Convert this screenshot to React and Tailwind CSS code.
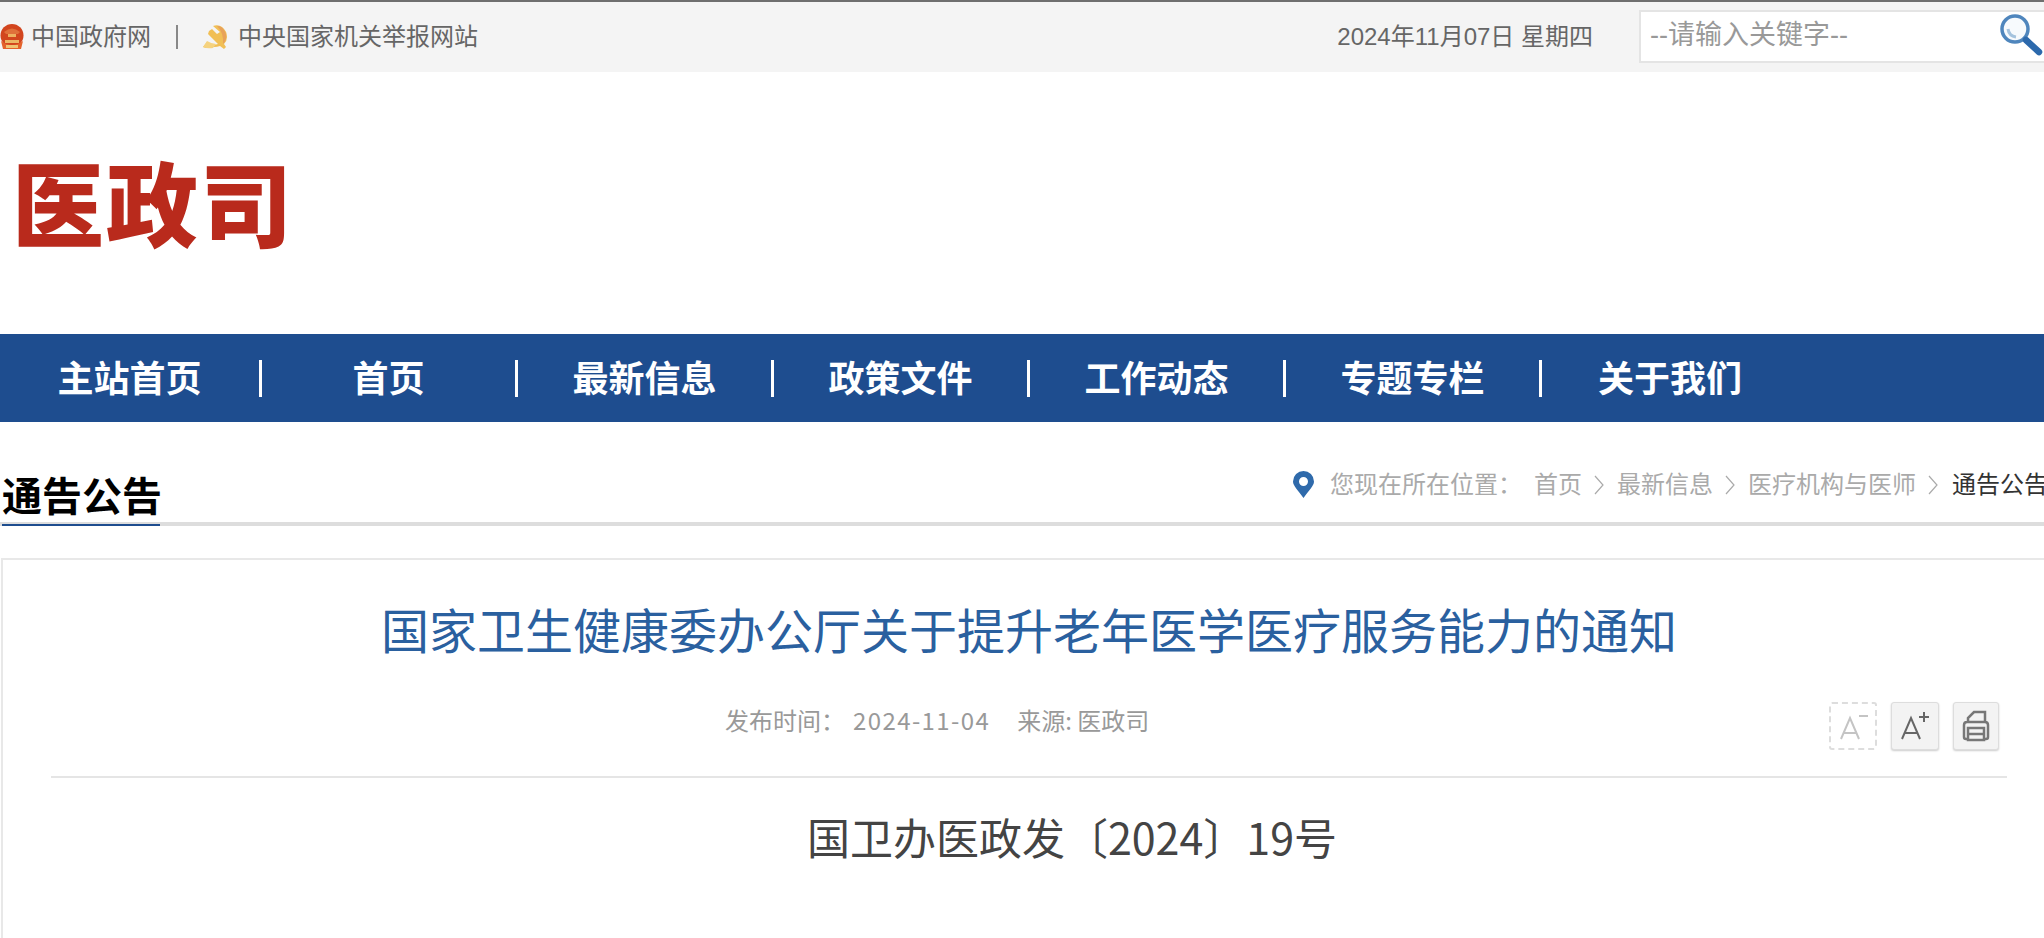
const SANS = 'font-["Liberation_Sans","Noto_Sans_CJK_SC",sans-serif]'

const NAV = ['主站首页', '首页', '最新信息', '政策文件', '工作动态', '专题专栏', '关于我们']
const CRUMBS = ['首页', '最新信息', '医疗机构与医师']

function Emblem() {
  return (
    <svg width="24" height="26" viewBox="0 0 24 26" className="shrink-0 blur-[0.4px]">
      <circle cx="12" cy="11.500" r="11.500" fill="#d2451e" />
      <path d="M4 8q8-7 16 0l-2 2H6z" fill="#e0703a" />
      <path d="M8 10h8v3H8z" fill="#eeb060" />
      <path d="M5 16h14v3H5z" fill="#ecb765" />
      <path d="M1 17q11 8 22 0l-2 8H3z" fill="#e4622a" />
      <path d="M6 21h12v3H6z" fill="#f0c474" />
    </svg>
  )
}

function PartyIcon() {
  return (
    <svg width="25" height="24" viewBox="0 0 25 24" className="shrink-0 blur-[0.4px]">
      <path d="M10 1q5-2 9 1q5 4 5 10q0 4-3 7l2 3-2 2-4-3q-6 2-11 0l-3 2-3-1 4-5q5 4 11 2L5 9l1-3 3-2 5 5 3-2z" fill="#f1bf55" />
      <path d="M14 1q5 0 7 4q3 4 2 9q-1 3-3 5q1-11-6-18z" fill="#e8a259" />
      <path d="M0 22l4-6q5 3 9 3l-3 4q-6 1-10-1z" fill="#f5d27e" />
    </svg>
  )
}

function SearchIcon() {
  return (
    <svg width="43" height="42" viewBox="0 0 43 42" className="-mt-[2px] shrink-0 blur-[0.3px]">
      <circle cx="15" cy="15" r="13" fill="#f7fafd" stroke="#4f86bd" strokeWidth="3.500" />
      <path d="M8 15q1 7 8 8" fill="none" stroke="#a5c3de" strokeWidth="3" />
      <path d="M26 26l13 12" stroke="#2c69ac" strokeWidth="6.500" strokeLinecap="round" />
    </svg>
  )
}

function Chevron() {
  return (
    <svg width="11" height="20" viewBox="0 0 11 20" className="shrink-0">
      <path d="M1 1l8 9-8 9" fill="none" stroke="#aaa" strokeWidth="1.200" />
    </svg>
  )
}

function TopBar() {
  return (
    <div className="flex h-[72px] items-center border-t-2 border-[#6f6f6f] bg-[#f4f4f4] text-[24px] text-[#666]">
      <Emblem />
      <span className="ml-[7px]">中国政府网</span>
      <span className="ml-[25px] h-6 w-0.5 bg-[#888]" />
      <span className="ml-[25px]"><PartyIcon /></span>
      <span className="ml-[10px]">中央国家机关举报网站</span>
      <span className="-mt-px ml-auto">2024年11月07日 星期四</span>
      <div className="-mt-[2px] ml-[46px] flex h-[53px] w-[405px] items-center justify-between border-2 border-r-0 border-[#e4e4e4] bg-white pl-[9px] pr-[1px] text-[27px] text-[#999]">
        <span className="-mt-[2px]">--请输入关键字--</span>
        <SearchIcon />
      </div>
    </div>
  )
}

function NavBar() {
  return (
    <nav className="flex h-[88px] items-center bg-[#1e4d8f] text-[36px] font-bold text-white">
      {NAV.map((item, i) => (
        <div key={item} className={i === 0 ? 'flex w-[262px] items-center' : 'flex w-[256px] items-center'}>
          <span className="flex-1 pt-[3px] text-center">{item}</span>
          {i < NAV.length - 1 && <span className="h-[37px] w-[3px] bg-white" />}
        </div>
      ))}
    </nav>
  )
}

function Breadcrumb() {
  return (
    <div className="ml-[1132px] flex shrink-0 items-center gap-[15px] whitespace-nowrap text-[24px] text-[#aaa]">
      <svg width="23" height="27" viewBox="0 0 23 27" className="shrink-0">
        <path fillRule="evenodd" d="M11.500 27C6 19 1 15 1 10.500a10.500 10.500 0 0 1 21 0C22 15 17 19 11.500 27zm0-12a4.500 4.500 0 1 0 0-9 4.500 4.500 0 0 0 0 9z" fill="#2f6aab" />
      </svg>
      <span>您现在所在位置：</span>
      <span className="-ml-[3px] flex items-center gap-[12px]">
        {CRUMBS.map(c => (
          <span key={c} className="flex items-center gap-[12px]">
            <span>{c}</span>
            <Chevron />
          </span>
        ))}
        <span className="ml-px text-[#333]">通告公告</span>
      </span>
    </div>
  )
}

function ToolButtons() {
  return (
    <div className="flex items-center gap-[14px]">
      <div className="grid h-12 w-12 place-items-center rounded-[3px] border-2 border-dashed border-[#ddd]">
        <svg width="32" height="30" viewBox="0 0 32 30">
          <path d="M4 28L13 7l9 21M7 22h12M22 5h9" fill="none" stroke="#c4c4c4" strokeWidth="2" />
        </svg>
      </div>
      <div className="grid h-12 w-12 place-items-center rounded-[3px] border border-[#ddd] bg-[#f3f3f3] shadow-[0_1px_2px_#ccc]">
        <svg width="32" height="30" viewBox="0 0 32 30">
          <path d="M3 28L12 7l9 21M6 22h12M20 6h10M25 1v10" fill="none" stroke="#666" strokeWidth="2" />
        </svg>
      </div>
      <div className="grid h-12 w-[46px] place-items-center rounded-[3px] border border-[#ddd] bg-[#f3f3f3] shadow-[0_1px_2px_#ccc]">
        <svg width="28" height="32" viewBox="0 0 28 32">
          <path d="M6 12V8l6-6h11v10M6 29H4q-2 0-2-2V15q0-3 3-3h18q3 0 3 3v12q0 2-2 2h-2M6 18h16v12H6zM6 24h16" fill="none" stroke="#777" strokeWidth="2.500" />
        </svg>
      </div>
    </div>
  )
}

export default function App() {
  return (
    <div className={`flex h-[938px] flex-col overflow-hidden bg-white ${SANS}`}>
      <TopBar />
      <div className="flex h-[262px] shrink-0 items-center pl-[12px] pt-[10px]">
        <span className="text-[92px] font-black leading-none tracking-[2px] text-[#b92a1c]">医政司</span>
      </div>
      <NavBar />
      <div className="flex h-[104px] shrink-0 items-end border-b-4 border-[#ddd]">
        <div className="relative ml-0.5 w-[158px] shrink-0 whitespace-nowrap pb-[1px] text-[40px] font-bold leading-[48px] text-black">
          通告公告
          <span className="absolute -bottom-1 left-0 h-[2px] w-full bg-[#1e4d8f]" />
        </div>
        <div className="flex flex-1 items-center self-center overflow-hidden pb-[4px] pt-[29px]">
          <Breadcrumb />
        </div>
      </div>
      <div className="ml-px mt-8 flex-1 border-l-2 border-t-2 border-[#e8e8e8] pl-[48px] pr-[37px]">
        <h1 className="pt-[43px] text-center text-[48px] font-normal leading-[60px] text-[#2a609f]">
          国家卫生健康委办公厅关于提升老年医学医疗服务能力的通知
        </h1>
        <div className="mt-[31px] flex h-[84px] items-start border-b-2 border-[#e5e5e5] font-['Noto_Sans_CJK_SC',sans-serif]">
          <div className="flex h-12 items-center pl-[674px] pt-[3px] text-[24px] text-[#999]">
            <span>发布时间：</span>
            <span className="ml-[8px] tracking-[1.4px]">2024-11-04</span>
            <span className="ml-[27px]">来源: 医政司</span>
          </div>
          <div className="ml-auto pr-[8px] pt-[8px]"><ToolButtons /></div>
        </div>
        <p className="mt-[28px] indent-[2em] text-center font-['Noto_Sans_CJK_SC',sans-serif] text-[43px] leading-[60px] text-[#444]">
          国卫办医政发〔2024〕19号
        </p>
      </div>
    </div>
  )
}
